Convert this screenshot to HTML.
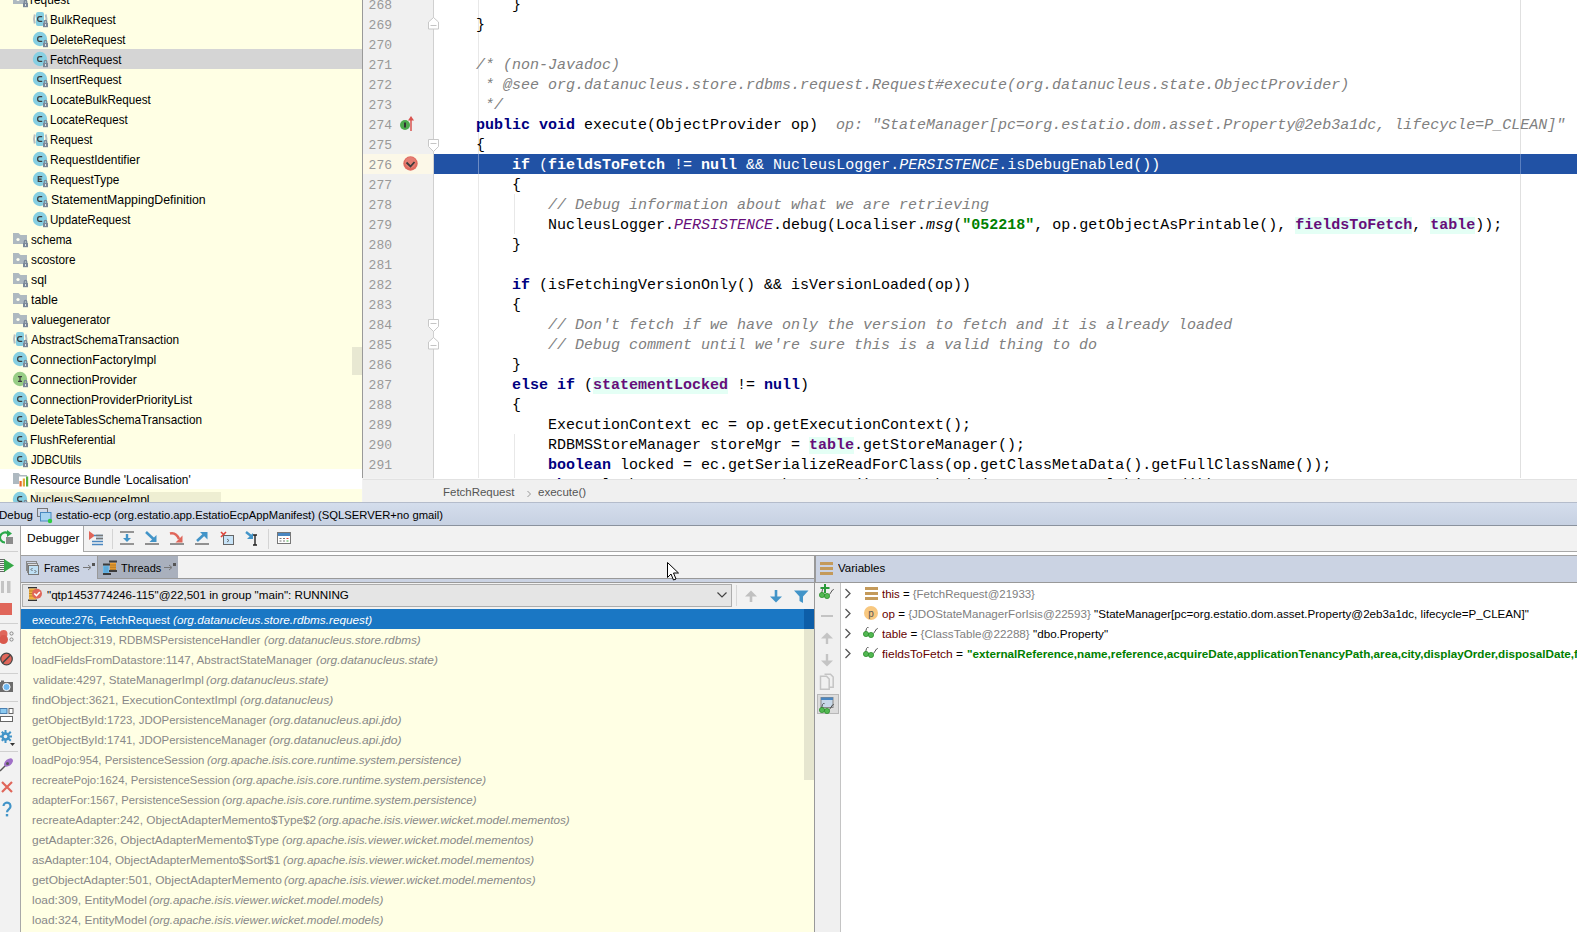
<!DOCTYPE html>
<html><head><meta charset="utf-8"><style>
*{margin:0;padding:0;box-sizing:border-box}
html,body{width:1577px;height:932px;overflow:hidden;background:#f2f2f2;font-family:"Liberation Sans",sans-serif;font-size:12px;color:#000}
.a{position:absolute}
svg{position:absolute;overflow:visible}
#tree{left:0;top:0;width:362px;height:502px;background:#ffffe4;overflow:hidden}
.tr{position:absolute;left:0;width:362px;height:20px;white-space:pre;font-size:12.2px;color:#000}
.tt{position:absolute;top:1px;line-height:20px;height:20px}
#gut{left:362px;top:0;width:72px;height:478px;background:#f0f0f0;border-left:1px solid #999;overflow:hidden}
#code{left:434px;top:0;width:1143px;height:479px;background:#fff;overflow:hidden}
.ln{position:absolute;left:-2px;width:31px;text-align:right;font-family:"Liberation Mono",monospace;font-size:13px;color:#999;height:20px;line-height:24px}
.cl{position:absolute;left:6px;height:20px;line-height:24px;white-space:pre;font-family:"Liberation Mono",monospace;font-size:15px;color:#000}
.k{color:#000080;font-weight:bold}
.cm{color:#808080;font-style:italic}
.st{color:#008000;font-weight:bold}
.sf{color:#660e7a;font-style:italic}
.fl{color:#660e7a;font-weight:bold;background:#e4fff5}
.hl .k,.hl .fl,.hl .sf,.hl{color:#fff}
.hl .fl{background:none}
#bc{left:363px;top:479px;width:1214px;height:23px;background:#f0f0f0;border-top:1px solid #e2e2e2;color:#555;font-size:11.5px;line-height:23px}
#dtitle{left:0;top:502px;width:1577px;height:24px;background:linear-gradient(#d4ddec,#c7d1e2);border-top:1px solid #b4bccb;border-bottom:1px solid #8a929e;line-height:23px;font-size:11.3px}
#ltb{left:0;top:526px;width:21px;height:406px;background:#f2f2f2;border-right:1px solid #a8a8a8}
#dtb{left:21px;top:526px;width:1556px;height:29px;background:#fff}
#ftabs{left:21px;top:555px;width:794px;height:28px;background:#f2f2f2;border-top:1px solid #a0a0a0;border-bottom:1px solid #999}
#frames{left:21px;top:609px;width:794px;height:323px;background:#ffffe4;overflow:hidden}
.fr{position:absolute;left:0;width:783px;height:20px;line-height:23px;padding-left:11px;white-space:pre;color:#888;font-size:11.5px}
.fr i{font-style:italic}
#vhdr{left:815px;top:555px;width:762px;height:28px;background:#cbd3e3;border-top:1px solid #a0a0a0;border-left:1px solid #999;border-bottom:1px solid #999;line-height:25px;font-size:11.5px}
#vtb{left:815px;top:583px;width:26px;height:349px;background:#f0f0f0;border-right:1px solid #c4c4c4}
#vars{left:841px;top:583px;width:736px;height:349px;background:#fff;overflow:hidden}
.vr{position:absolute;height:20px;line-height:23px;white-space:pre;font-size:11.5px}
</style></head><body>
<div id="tree" class="a">
<div class="tr" style="top:-11px;"><svg style="left:13px;top:4px" width="18" height="15" viewBox="0 0 18 15"><path d="M0 0h5.5l2 2H14v9H0z" fill="#aeb9c0"/><circle cx="5" cy="6.5" r="1.6" fill="#fffff0"/><path d="M11.25 10.5v-1.8a1.25 1.25 0 0 1 2.5 0v1.8" stroke="#7a8899" fill="none" stroke-width="1.3"/><rect x="10" y="10" width="5" height="4.2" fill="#7a8899"/><rect x="12" y="11" width="1" height="2" fill="#e0e4e0"/></svg><span class="tt" style="left:30.31px;transform:scaleX(0.9736);transform-origin:0 0">request</span></div>
<div class="tr" style="top:9px;"><svg style="left:33px;top:3px" width="16" height="16" viewBox="0 0 16 16"><path d="M1.8 2.5Q0.2 7 1.8 11.5" stroke="#b4bcc0" stroke-width="2" fill="none"/><path d="M12.7 2.5Q14.3 7 12.7 11.5" stroke="#b4bcc0" stroke-width="2" fill="none"/><rect x="3" y="0" width="8" height="14" rx="2" fill="#86cfe2"/><path d="M9.2 4.6H6.6Q4.6 4.6 4.6 7Q4.6 9.4 6.6 9.4H9.2" stroke="#3c3c3c" stroke-width="1.25" fill="none"/><path d="M11.25 11.5v-1.8a1.25 1.25 0 0 1 2.5 0v1.8" stroke="#7a8899" fill="none" stroke-width="1.3"/><rect x="10" y="11" width="5" height="4.2" fill="#7a8899"/><rect x="12" y="12" width="1" height="2" fill="#e0e4e0"/></svg><span class="tt" style="left:50.15px;transform:scaleX(0.9528);transform-origin:0 0">BulkRequest</span></div>
<div class="tr" style="top:29px;"><svg style="left:33px;top:3px" width="16" height="16" viewBox="0 0 16 16"><circle cx="7" cy="7" r="7.2" fill="#86cfe2"/><path d="M9.2 4.6H6.6Q4.6 4.6 4.6 7Q4.6 9.4 6.6 9.4H9.2" stroke="#3c3c3c" stroke-width="1.25" fill="none"/><path d="M11.25 11.5v-1.8a1.25 1.25 0 0 1 2.5 0v1.8" stroke="#7a8899" fill="none" stroke-width="1.3"/><rect x="10" y="11" width="5" height="4.2" fill="#7a8899"/><rect x="12" y="12" width="1" height="2" fill="#e0e4e0"/></svg><span class="tt" style="left:50.16px;transform:scaleX(0.9367);transform-origin:0 0">DeleteRequest</span></div>
<div class="tr" style="top:49px;background:#d5d5d5;"><svg style="left:33px;top:3px" width="16" height="16" viewBox="0 0 16 16"><circle cx="7" cy="7" r="7.2" fill="#86cfe2"/><path d="M9.2 4.6H6.6Q4.6 4.6 4.6 7Q4.6 9.4 6.6 9.4H9.2" stroke="#3c3c3c" stroke-width="1.25" fill="none"/><path d="M11.25 11.5v-1.8a1.25 1.25 0 0 1 2.5 0v1.8" stroke="#7a8899" fill="none" stroke-width="1.3"/><rect x="10" y="11" width="5" height="4.2" fill="#7a8899"/><rect x="12" y="12" width="1" height="2" fill="#e0e4e0"/></svg><span class="tt" style="left:50.16px;transform:scaleX(0.9414);transform-origin:0 0">FetchRequest</span></div>
<div class="tr" style="top:69px;"><svg style="left:33px;top:3px" width="16" height="16" viewBox="0 0 16 16"><circle cx="7" cy="7" r="7.2" fill="#86cfe2"/><path d="M9.2 4.6H6.6Q4.6 4.6 4.6 7Q4.6 9.4 6.6 9.4H9.2" stroke="#3c3c3c" stroke-width="1.25" fill="none"/><path d="M11.25 11.5v-1.8a1.25 1.25 0 0 1 2.5 0v1.8" stroke="#7a8899" fill="none" stroke-width="1.3"/><rect x="10" y="11" width="5" height="4.2" fill="#7a8899"/><rect x="12" y="12" width="1" height="2" fill="#e0e4e0"/></svg><span class="tt" style="left:50.04px;transform:scaleX(0.9430);transform-origin:0 0">InsertRequest</span></div>
<div class="tr" style="top:89px;"><svg style="left:33px;top:3px" width="16" height="16" viewBox="0 0 16 16"><circle cx="7" cy="7" r="7.2" fill="#86cfe2"/><path d="M9.2 4.6H6.6Q4.6 4.6 4.6 7Q4.6 9.4 6.6 9.4H9.2" stroke="#3c3c3c" stroke-width="1.25" fill="none"/><path d="M11.25 11.5v-1.8a1.25 1.25 0 0 1 2.5 0v1.8" stroke="#7a8899" fill="none" stroke-width="1.3"/><rect x="10" y="11" width="5" height="4.2" fill="#7a8899"/><rect x="12" y="12" width="1" height="2" fill="#e0e4e0"/></svg><span class="tt" style="left:50.15px;transform:scaleX(0.9531);transform-origin:0 0">LocateBulkRequest</span></div>
<div class="tr" style="top:109px;"><svg style="left:33px;top:3px" width="16" height="16" viewBox="0 0 16 16"><circle cx="7" cy="7" r="7.2" fill="#86cfe2"/><path d="M9.2 4.6H6.6Q4.6 4.6 4.6 7Q4.6 9.4 6.6 9.4H9.2" stroke="#3c3c3c" stroke-width="1.25" fill="none"/><path d="M11.25 11.5v-1.8a1.25 1.25 0 0 1 2.5 0v1.8" stroke="#7a8899" fill="none" stroke-width="1.3"/><rect x="10" y="11" width="5" height="4.2" fill="#7a8899"/><rect x="12" y="12" width="1" height="2" fill="#e0e4e0"/></svg><span class="tt" style="left:50.15px;transform:scaleX(0.9469);transform-origin:0 0">LocateRequest</span></div>
<div class="tr" style="top:129px;"><svg style="left:33px;top:3px" width="16" height="16" viewBox="0 0 16 16"><path d="M1.8 2.5Q0.2 7 1.8 11.5" stroke="#b4bcc0" stroke-width="2" fill="none"/><path d="M12.7 2.5Q14.3 7 12.7 11.5" stroke="#b4bcc0" stroke-width="2" fill="none"/><rect x="3" y="0" width="8" height="14" rx="2" fill="#86cfe2"/><path d="M9.2 4.6H6.6Q4.6 4.6 4.6 7Q4.6 9.4 6.6 9.4H9.2" stroke="#3c3c3c" stroke-width="1.25" fill="none"/><path d="M11.25 11.5v-1.8a1.25 1.25 0 0 1 2.5 0v1.8" stroke="#7a8899" fill="none" stroke-width="1.3"/><rect x="10" y="11" width="5" height="4.2" fill="#7a8899"/><rect x="12" y="12" width="1" height="2" fill="#e0e4e0"/></svg><span class="tt" style="left:50.16px;transform:scaleX(0.9367);transform-origin:0 0">Request</span></div>
<div class="tr" style="top:149px;"><svg style="left:33px;top:3px" width="16" height="16" viewBox="0 0 16 16"><circle cx="7" cy="7" r="7.2" fill="#86cfe2"/><path d="M9.2 4.6H6.6Q4.6 4.6 4.6 7Q4.6 9.4 6.6 9.4H9.2" stroke="#3c3c3c" stroke-width="1.25" fill="none"/><path d="M11.25 11.5v-1.8a1.25 1.25 0 0 1 2.5 0v1.8" stroke="#7a8899" fill="none" stroke-width="1.3"/><rect x="10" y="11" width="5" height="4.2" fill="#7a8899"/><rect x="12" y="12" width="1" height="2" fill="#e0e4e0"/></svg><span class="tt" style="left:50.12px;transform:scaleX(0.9754);transform-origin:0 0">RequestIdentifier</span></div>
<div class="tr" style="top:169px;"><svg style="left:33px;top:3px" width="16" height="16" viewBox="0 0 16 16"><circle cx="7" cy="7" r="7.2" fill="#86cfe2"/><path d="M9.2 4.6H5.3V9.4H9.2M5.3 7H8.6" stroke="#3c3c3c" stroke-width="1.25" fill="none"/><path d="M11.25 11.5v-1.8a1.25 1.25 0 0 1 2.5 0v1.8" stroke="#7a8899" fill="none" stroke-width="1.3"/><rect x="10" y="11" width="5" height="4.2" fill="#7a8899"/><rect x="12" y="12" width="1" height="2" fill="#e0e4e0"/></svg><span class="tt" style="left:50.14px;transform:scaleX(0.9634);transform-origin:0 0">RequestType</span></div>
<div class="tr" style="top:189px;"><svg style="left:33px;top:3px" width="16" height="16" viewBox="0 0 16 16"><circle cx="7" cy="7" r="7.2" fill="#86cfe2"/><path d="M9.2 4.6H6.6Q4.6 4.6 4.6 7Q4.6 9.4 6.6 9.4H9.2" stroke="#3c3c3c" stroke-width="1.25" fill="none"/><path d="M11.25 11.5v-1.8a1.25 1.25 0 0 1 2.5 0v1.8" stroke="#7a8899" fill="none" stroke-width="1.3"/><rect x="10" y="11" width="5" height="4.2" fill="#7a8899"/><rect x="12" y="12" width="1" height="2" fill="#e0e4e0"/></svg><span class="tt" style="left:50.54px;transform:scaleX(1.0101);transform-origin:0 0">StatementMappingDefinition</span></div>
<div class="tr" style="top:209px;"><svg style="left:33px;top:3px" width="16" height="16" viewBox="0 0 16 16"><circle cx="7" cy="7" r="7.2" fill="#86cfe2"/><path d="M9.2 4.6H6.6Q4.6 4.6 4.6 7Q4.6 9.4 6.6 9.4H9.2" stroke="#3c3c3c" stroke-width="1.25" fill="none"/><path d="M11.25 11.5v-1.8a1.25 1.25 0 0 1 2.5 0v1.8" stroke="#7a8899" fill="none" stroke-width="1.3"/><rect x="10" y="11" width="5" height="4.2" fill="#7a8899"/><rect x="12" y="12" width="1" height="2" fill="#e0e4e0"/></svg><span class="tt" style="left:50.21px;transform:scaleX(0.9502);transform-origin:0 0">UpdateRequest</span></div>
<div class="tr" style="top:229px;"><svg style="left:13px;top:4px" width="18" height="15" viewBox="0 0 18 15"><path d="M0 0h5.5l2 2H14v9H0z" fill="#aeb9c0"/><circle cx="5" cy="6.5" r="1.6" fill="#fffff0"/><path d="M11.25 10.5v-1.8a1.25 1.25 0 0 1 2.5 0v1.8" stroke="#7a8899" fill="none" stroke-width="1.3"/><rect x="10" y="10" width="5" height="4.2" fill="#7a8899"/><rect x="12" y="11" width="1" height="2" fill="#e0e4e0"/></svg><span class="tt" style="left:30.78px;transform:scaleX(0.9567);transform-origin:0 0">schema</span></div>
<div class="tr" style="top:249px;"><svg style="left:13px;top:4px" width="18" height="15" viewBox="0 0 18 15"><path d="M0 0h5.5l2 2H14v9H0z" fill="#aeb9c0"/><circle cx="5" cy="6.5" r="1.6" fill="#fffff0"/><path d="M11.25 10.5v-1.8a1.25 1.25 0 0 1 2.5 0v1.8" stroke="#7a8899" fill="none" stroke-width="1.3"/><rect x="10" y="10" width="5" height="4.2" fill="#7a8899"/><rect x="12" y="11" width="1" height="2" fill="#e0e4e0"/></svg><span class="tt" style="left:30.77px;transform:scaleX(0.9673);transform-origin:0 0">scostore</span></div>
<div class="tr" style="top:269px;"><svg style="left:13px;top:4px" width="18" height="15" viewBox="0 0 18 15"><path d="M0 0h5.5l2 2H14v9H0z" fill="#aeb9c0"/><circle cx="5" cy="6.5" r="1.6" fill="#fffff0"/><path d="M11.25 10.5v-1.8a1.25 1.25 0 0 1 2.5 0v1.8" stroke="#7a8899" fill="none" stroke-width="1.3"/><rect x="10" y="10" width="5" height="4.2" fill="#7a8899"/><rect x="12" y="11" width="1" height="2" fill="#e0e4e0"/></svg><span class="tt" style="left:30.76px;transform:scaleX(1.0122);transform-origin:0 0">sql</span></div>
<div class="tr" style="top:289px;"><svg style="left:13px;top:4px" width="18" height="15" viewBox="0 0 18 15"><path d="M0 0h5.5l2 2H14v9H0z" fill="#aeb9c0"/><circle cx="5" cy="6.5" r="1.6" fill="#fffff0"/><path d="M11.25 10.5v-1.8a1.25 1.25 0 0 1 2.5 0v1.8" stroke="#7a8899" fill="none" stroke-width="1.3"/><rect x="10" y="10" width="5" height="4.2" fill="#7a8899"/><rect x="12" y="11" width="1" height="2" fill="#e0e4e0"/></svg><span class="tt" style="left:30.91px;transform:scaleX(1.0116);transform-origin:0 0">table</span></div>
<div class="tr" style="top:309px;"><svg style="left:13px;top:4px" width="18" height="15" viewBox="0 0 18 15"><path d="M0 0h5.5l2 2H14v9H0z" fill="#aeb9c0"/><circle cx="5" cy="6.5" r="1.6" fill="#fffff0"/><path d="M11.25 10.5v-1.8a1.25 1.25 0 0 1 2.5 0v1.8" stroke="#7a8899" fill="none" stroke-width="1.3"/><rect x="10" y="10" width="5" height="4.2" fill="#7a8899"/><rect x="12" y="11" width="1" height="2" fill="#e0e4e0"/></svg><span class="tt" style="left:31.06px;transform:scaleX(0.9733);transform-origin:0 0">valuegenerator</span></div>
<div class="tr" style="top:329px;"><svg style="left:13px;top:3px" width="16" height="16" viewBox="0 0 16 16"><path d="M1.8 2.5Q0.2 7 1.8 11.5" stroke="#b4bcc0" stroke-width="2" fill="none"/><path d="M12.7 2.5Q14.3 7 12.7 11.5" stroke="#b4bcc0" stroke-width="2" fill="none"/><rect x="3" y="0" width="8" height="14" rx="2" fill="#86cfe2"/><path d="M9.2 4.6H6.6Q4.6 4.6 4.6 7Q4.6 9.4 6.6 9.4H9.2" stroke="#3c3c3c" stroke-width="1.25" fill="none"/><path d="M11.25 11.5v-1.8a1.25 1.25 0 0 1 2.5 0v1.8" stroke="#7a8899" fill="none" stroke-width="1.3"/><rect x="10" y="11" width="5" height="4.2" fill="#7a8899"/><rect x="12" y="12" width="1" height="2" fill="#e0e4e0"/></svg><span class="tt" style="left:31.08px;transform:scaleX(0.9709);transform-origin:0 0">AbstractSchemaTransaction</span></div>
<div class="tr" style="top:349px;"><svg style="left:13px;top:3px" width="16" height="16" viewBox="0 0 16 16"><circle cx="7" cy="7" r="7.2" fill="#86cfe2"/><path d="M9.2 4.6H6.6Q4.6 4.6 4.6 7Q4.6 9.4 6.6 9.4H9.2" stroke="#3c3c3c" stroke-width="1.25" fill="none"/><path d="M11.25 11.5v-1.8a1.25 1.25 0 0 1 2.5 0v1.8" stroke="#7a8899" fill="none" stroke-width="1.3"/><rect x="10" y="11" width="5" height="4.2" fill="#7a8899"/><rect x="12" y="12" width="1" height="2" fill="#e0e4e0"/></svg><span class="tt" style="left:30.48px;transform:scaleX(1.0082);transform-origin:0 0">ConnectionFactoryImpl</span></div>
<div class="tr" style="top:369px;"><svg style="left:13px;top:3px" width="16" height="16" viewBox="0 0 16 16"><circle cx="7" cy="7" r="7.2" fill="#98cd85"/><path d="M5 4.6H9M7 4.6V9.4M5 9.4H9" stroke="#3c3c3c" stroke-width="1.25" fill="none"/><path d="M11.25 11.5v-1.8a1.25 1.25 0 0 1 2.5 0v1.8" stroke="#7a8899" fill="none" stroke-width="1.3"/><rect x="10" y="11" width="5" height="4.2" fill="#7a8899"/><rect x="12" y="12" width="1" height="2" fill="#e0e4e0"/></svg><span class="tt" style="left:30.48px;transform:scaleX(0.9970);transform-origin:0 0">ConnectionProvider</span></div>
<div class="tr" style="top:389px;"><svg style="left:13px;top:3px" width="16" height="16" viewBox="0 0 16 16"><circle cx="7" cy="7" r="7.2" fill="#86cfe2"/><path d="M9.2 4.6H6.6Q4.6 4.6 4.6 7Q4.6 9.4 6.6 9.4H9.2" stroke="#3c3c3c" stroke-width="1.25" fill="none"/><path d="M11.25 11.5v-1.8a1.25 1.25 0 0 1 2.5 0v1.8" stroke="#7a8899" fill="none" stroke-width="1.3"/><rect x="10" y="11" width="5" height="4.2" fill="#7a8899"/><rect x="12" y="12" width="1" height="2" fill="#e0e4e0"/></svg><span class="tt" style="left:30.49px;transform:scaleX(0.9895);transform-origin:0 0">ConnectionProviderPriorityList</span></div>
<div class="tr" style="top:409px;"><svg style="left:13px;top:3px" width="16" height="16" viewBox="0 0 16 16"><circle cx="7" cy="7" r="7.2" fill="#86cfe2"/><path d="M9.2 4.6H6.6Q4.6 4.6 4.6 7Q4.6 9.4 6.6 9.4H9.2" stroke="#3c3c3c" stroke-width="1.25" fill="none"/><path d="M11.25 11.5v-1.8a1.25 1.25 0 0 1 2.5 0v1.8" stroke="#7a8899" fill="none" stroke-width="1.3"/><rect x="10" y="11" width="5" height="4.2" fill="#7a8899"/><rect x="12" y="12" width="1" height="2" fill="#e0e4e0"/></svg><span class="tt" style="left:30.13px;transform:scaleX(0.9643);transform-origin:0 0">DeleteTablesSchemaTransaction</span></div>
<div class="tr" style="top:429px;"><svg style="left:13px;top:3px" width="16" height="16" viewBox="0 0 16 16"><circle cx="7" cy="7" r="7.2" fill="#86cfe2"/><path d="M9.2 4.6H6.6Q4.6 4.6 4.6 7Q4.6 9.4 6.6 9.4H9.2" stroke="#3c3c3c" stroke-width="1.25" fill="none"/><path d="M11.25 11.5v-1.8a1.25 1.25 0 0 1 2.5 0v1.8" stroke="#7a8899" fill="none" stroke-width="1.3"/><rect x="10" y="11" width="5" height="4.2" fill="#7a8899"/><rect x="12" y="12" width="1" height="2" fill="#e0e4e0"/></svg><span class="tt" style="left:30.14px;transform:scaleX(0.9629);transform-origin:0 0">FlushReferential</span></div>
<div class="tr" style="top:449px;"><svg style="left:13px;top:3px" width="16" height="16" viewBox="0 0 16 16"><circle cx="7" cy="7" r="7.2" fill="#86cfe2"/><path d="M9.2 4.6H6.6Q4.6 4.6 4.6 7Q4.6 9.4 6.6 9.4H9.2" stroke="#3c3c3c" stroke-width="1.25" fill="none"/><path d="M11.25 11.5v-1.8a1.25 1.25 0 0 1 2.5 0v1.8" stroke="#7a8899" fill="none" stroke-width="1.3"/><rect x="10" y="11" width="5" height="4.2" fill="#7a8899"/><rect x="12" y="12" width="1" height="2" fill="#e0e4e0"/></svg><span class="tt" style="left:30.93px;transform:scaleX(0.9054);transform-origin:0 0">JDBCUtils</span></div>
<div class="tr" style="top:469px;background:#fff;"><svg style="left:13px;top:4px" width="18" height="15" viewBox="0 0 18 15"><path d="M0 0h5.5l2 2H14v1.5H6V11H0z" fill="#aeb9c0"/><rect x="6.5" y="8" width="2.2" height="5.5" fill="#e8682a"/><rect x="9.8" y="5.5" width="2.2" height="8" fill="#e0a838"/><rect x="13" y="3.5" width="2.2" height="10" fill="#58b040"/></svg><span class="tt" style="left:30.13px;transform:scaleX(0.9684);transform-origin:0 0">Resource Bundle &#x27;Localisation&#x27;</span></div>
<div class="tr" style="top:489px;"><div class="a" style="left:35px;top:3px;width:186px;height:17px;background:#eeeed2"></div><svg style="left:13px;top:3px" width="16" height="16" viewBox="0 0 16 16"><circle cx="7" cy="7" r="7.2" fill="#86cfe2"/><path d="M9.2 4.6H6.6Q4.6 4.6 4.6 7Q4.6 9.4 6.6 9.4H9.2" stroke="#3c3c3c" stroke-width="1.25" fill="none"/><path d="M11.25 11.5v-1.8a1.25 1.25 0 0 1 2.5 0v1.8" stroke="#7a8899" fill="none" stroke-width="1.3"/><rect x="10" y="11" width="5" height="4.2" fill="#7a8899"/><rect x="12" y="12" width="1" height="2" fill="#e0e4e0"/></svg><span class="tt" style="left:30.12px;transform:scaleX(0.9798);transform-origin:0 0">NucleusSequenceImpl</span></div>
<div class="a" style="left:352px;top:347px;width:10px;height:28px;background:#e8e8d2"></div>
</div>
<div id="gut" class="a">
<div class="a" style="left:0;top:154px;width:70px;height:20px;background:#fcf8e8"></div>
<div class="ln" style="top:-6px">268</div>
<div class="ln" style="top:14px">269</div>
<div class="ln" style="top:34px">270</div>
<div class="ln" style="top:54px">271</div>
<div class="ln" style="top:74px">272</div>
<div class="ln" style="top:94px">273</div>
<div class="ln" style="top:114px">274</div>
<div class="ln" style="top:134px">275</div>
<div class="ln" style="top:154px">276</div>
<div class="ln" style="top:174px">277</div>
<div class="ln" style="top:194px">278</div>
<div class="ln" style="top:214px">279</div>
<div class="ln" style="top:234px">280</div>
<div class="ln" style="top:254px">281</div>
<div class="ln" style="top:274px">282</div>
<div class="ln" style="top:294px">283</div>
<div class="ln" style="top:314px">284</div>
<div class="ln" style="top:334px">285</div>
<div class="ln" style="top:354px">286</div>
<div class="ln" style="top:374px">287</div>
<div class="ln" style="top:394px">288</div>
<div class="ln" style="top:414px">289</div>
<div class="ln" style="top:434px">290</div>
<div class="ln" style="top:454px">291</div>
<div class="ln" style="top:474px">292</div>
<div class="a" style="left:70px;top:0;width:1px;height:478px;background:#d0d0d0"></div>
<svg style="left:36px;top:115px" width="20" height="18" viewBox="0 0 20 18"><circle cx="6" cy="10" r="5" fill="#4eaa4e"/><rect x="5" y="7.5" width="2" height="5" fill="#333"/><path d="M12 16V3" stroke="#d9534f" stroke-width="1.5"/><path d="M9 5.5L12 1L15 5.5z" fill="#d9534f"/></svg>
<svg style="left:40px;top:156px" width="16" height="16" viewBox="0 0 16 16"><circle cx="7.5" cy="7.5" r="7.2" fill="#e06a5e"/><circle cx="7.5" cy="6.5" r="5.5" fill="#e88a80" opacity="0.6"/><path d="M3.5 6.5L7.5 10.5L11.5 6" stroke="#3c3c3c" stroke-width="1.8" fill="none"/></svg>
</div>
<div id="code" class="a">
<div class="a" style="left:1086px;top:0;width:1px;height:478px;background:#e0e0e0"></div>
<div class="a" style="left:0;top:154px;width:1143px;height:20px;background:#2152a5"></div>
<div class="a" style="left:1086px;top:154px;width:1px;height:20px;background:#5a7fc0"></div>
<div class="a" style="left:44px;top:0;width:1px;height:478px;background:#e8e8e8"></div>
<div class="a" style="left:44px;top:154px;width:1px;height:20px;background:#6d8cc4"></div>
<div class="a" style="left:80px;top:194px;width:1px;height:40px;background:#e8e8e8"></div>
<div class="a" style="left:80px;top:434px;width:1px;height:44px;background:#e8e8e8"></div>
<div class="cl" style="top:-6px">        }</div>
<div class="cl" style="top:14px">    }</div>
<div class="cl" style="top:34px"></div>
<div class="cl" style="top:54px"><span class="cm">    /* (non-Javadoc)</span></div>
<div class="cl" style="top:74px"><span class="cm">     * @see org.datanucleus.store.rdbms.request.Request#execute(org.datanucleus.state.ObjectProvider)</span></div>
<div class="cl" style="top:94px"><span class="cm">     */</span></div>
<div class="cl" style="top:114px">    <span class="k">public void</span> execute(ObjectProvider op)  <span class="cm">op: "StateManager[pc=org.estatio.dom.asset.Property@2eb3a1dc, lifecycle=P_CLEAN]"</span></div>
<div class="cl" style="top:134px">    {</div>
<div class="cl hl" style="top:154px">        <span class="k">if</span> (<span class="fl">fieldsToFetch</span> != <span class="k">null</span> &amp;&amp; NucleusLogger.<span class="sf">PERSISTENCE</span>.isDebugEnabled())</div>
<div class="cl" style="top:174px">        {</div>
<div class="cl" style="top:194px"><span class="cm">            // Debug information about what we are retrieving</span></div>
<div class="cl" style="top:214px">            NucleusLogger.<span class="sf">PERSISTENCE</span>.debug(Localiser.<span class="sf" style="color:#000">msg</span>(<span class="st">"052218"</span>, op.getObjectAsPrintable(), <span class="fl">fieldsToFetch</span>, <span class="fl">table</span>));</div>
<div class="cl" style="top:234px">        }</div>
<div class="cl" style="top:254px"></div>
<div class="cl" style="top:274px">        <span class="k">if</span> (isFetchingVersionOnly() &amp;&amp; isVersionLoaded(op))</div>
<div class="cl" style="top:294px">        {</div>
<div class="cl" style="top:314px"><span class="cm">            // Don't fetch if we have only the version to fetch and it is already loaded</span></div>
<div class="cl" style="top:334px"><span class="cm">            // Debug comment until we're sure this is a valid thing to do</span></div>
<div class="cl" style="top:354px">        }</div>
<div class="cl" style="top:374px">        <span class="k">else if</span> (<span class="fl">statementLocked</span> != <span class="k">null</span>)</div>
<div class="cl" style="top:394px">        {</div>
<div class="cl" style="top:414px">            ExecutionContext ec = op.getExecutionContext();</div>
<div class="cl" style="top:434px">            RDBMSStoreManager storeMgr = <span class="fl">table</span>.getStoreManager();</div>
<div class="cl" style="top:454px">            <span class="k">boolean</span> locked = ec.getSerializeReadForClass(op.getClassMetaData().getFullClassName());</div>
<div class="cl" style="top:474px">            <span class="k">short</span> lockType = ec.getLockManager().getLockMode(op.getInternalObjectId());</div>
</div>
<svg style="left:428px;top:17px" width="11" height="13" viewBox="0 0 11 13"><path d="M0.5 5L5.5 0.5L10.5 5V12H0.5z" fill="#fff" stroke="#c8c8c8"/><path d="M2.5 8.5h6" stroke="#c4c4c4"/></svg>
<svg style="left:428px;top:139px" width="11" height="13" viewBox="0 0 11 13"><path d="M0.5 0.5H10.5V7.5L5.5 12.5L0.5 7.5z" fill="#fff" stroke="#c8c8c8"/><path d="M2.5 4.5h6" stroke="#c4c4c4"/></svg>
<svg style="left:428px;top:319px" width="11" height="13" viewBox="0 0 11 13"><path d="M0.5 0.5H10.5V7.5L5.5 12.5L0.5 7.5z" fill="#fff" stroke="#c8c8c8"/><path d="M2.5 4.5h6" stroke="#c4c4c4"/></svg>
<svg style="left:428px;top:337px" width="11" height="13" viewBox="0 0 11 13"><path d="M0.5 5L5.5 0.5L10.5 5V12H0.5z" fill="#fff" stroke="#c8c8c8"/><path d="M2.5 8.5h6" stroke="#c4c4c4"/></svg>
<div id="bc" class="a"><svg style="left:163px;top:10px" width="6" height="8" viewBox="0 0 6 8"><path d="M1.5 1L4.5 4L1.5 7" stroke="#999" fill="none" stroke-width="1"/></svg></div>
<div id="dtitle" class="a"><svg style="left:37px;top:5px" width="16" height="16" viewBox="0 0 16 16"><rect x="0.5" y="0.5" width="10" height="8" fill="none" stroke="#777"/><rect x="3.5" y="4.5" width="10.5" height="8.5" fill="#a8d4f0" stroke="#4a8ac0"/><circle cx="13" cy="13" r="2.2" fill="#2ecc40"/></svg></div>
<div id="ltb" class="a"></div>
<svg style="left:0px;top:530px" width="16" height="16" viewBox="0 0 16 16"><path d="M8 3.5A5 5 0 1 0 5 12.5" stroke="#2aa84a" stroke-width="2.2" fill="none"/><path d="M7 0L12 3.5L7 7z" fill="#2aa84a"/><rect x="6" y="7" width="7" height="7" fill="#8c8c8c"/></svg>
<div class="a" style="left:0;top:551px;width:18px;height:1px;background:#d0d0d0"></div>
<svg style="left:0px;top:559px" width="16" height="14" viewBox="0 0 16 14"><path d="M0 0.5h5M0 2.5h5M0 4.5h5M0 6.5h5M0 8.5h5M0 10.5h5M0 12.5h5" stroke="#666" stroke-width="1"/><path d="M4 0L14 6.5L4 13z" fill="#35a846"/></svg>
<svg style="left:0px;top:581px" width="14" height="13" viewBox="0 0 14 13"><rect x="1" y="0" width="3" height="12" fill="#c4c4c4"/><rect x="7" y="0" width="3.5" height="12" fill="#c4c4c4"/></svg>
<svg style="left:0px;top:603px" width="14" height="13" viewBox="0 0 14 13"><rect x="0" y="0" width="12" height="12" fill="#e0665a"/></svg>
<div class="a" style="left:0;top:623px;width:18px;height:1px;background:#d0d0d0"></div>
<svg style="left:0px;top:630px" width="16" height="15" viewBox="0 0 16 15"><circle cx="3.5" cy="4" r="4" fill="#e0665a"/><circle cx="3.5" cy="9.5" r="4.5" fill="#d9584c"/><circle cx="11.5" cy="3.5" r="1.6" fill="none" stroke="#888"/><circle cx="11.5" cy="9.5" r="1.6" fill="none" stroke="#888"/></svg>
<svg style="left:0px;top:652px" width="15" height="15" viewBox="0 0 15 15"><circle cx="6.5" cy="7" r="5.8" fill="#e0665a" stroke="#444" stroke-width="1.2"/><path d="M2.5 11L10.5 3" stroke="#444" stroke-width="1.6"/></svg>
<div class="a" style="left:0;top:673px;width:18px;height:1px;background:#d0d0d0"></div>
<svg style="left:0px;top:679px" width="15" height="15" viewBox="0 0 15 15"><rect x="0" y="3" width="13" height="10" fill="#6c6c6c"/><rect x="1" y="1.5" width="3" height="2" fill="#6c6c6c"/><circle cx="6.5" cy="8" r="3.6" fill="#70b8f0" stroke="#fff" stroke-width="1"/></svg>
<div class="a" style="left:0;top:701px;width:18px;height:1px;background:#d0d0d0"></div>
<svg style="left:0px;top:708px" width="15" height="15" viewBox="0 0 15 15"><rect x="0" y="0.5" width="7" height="5" fill="#8ccaf0" stroke="#4a7fb0"/><rect x="9" y="0.5" width="4" height="5" fill="#fff" stroke="#666"/><rect x="0.5" y="8.5" width="12" height="5" fill="#fff" stroke="#666"/></svg>
<svg style="left:0px;top:730px" width="16" height="16" viewBox="0 0 16 16"><g fill="#4294c8"><circle cx="5.5" cy="6.5" r="4.2"/><path d="M4.5 0h2v13h-2zM-1 5.5h13v2H-1z"/><path d="M1 2.5l1.5-1.5 9 9-1.5 1.5zM10 1l1.5 1.5-9 9L1 10z"/></g><circle cx="5.5" cy="6.5" r="1.8" fill="#f2f2f2"/><path d="M10 13h5l-2.5 3z" fill="#333"/></svg>
<div class="a" style="left:0;top:751px;width:18px;height:1px;background:#d0d0d0"></div>
<svg style="left:0px;top:757px" width="15" height="15" viewBox="0 0 15 15"><path d="M0 14L6 8" stroke="#555" stroke-width="1.5"/><ellipse cx="8.5" cy="5.5" rx="5.2" ry="3.2" transform="rotate(-40 8.5 5.5)" fill="#a070c8"/><circle cx="7.5" cy="6.5" r="1.5" fill="#555"/></svg>
<svg style="left:1px;top:781px" width="12" height="12" viewBox="0 0 12 12"><path d="M1 1L11 11M11 1L1 11" stroke="#e0665a" stroke-width="2.2"/></svg>
<svg style="left:2px;top:802px" width="12" height="15" viewBox="0 0 12 15"><path d="M1.5 4a3.5 3.5 0 1 1 5.5 3c-1.3 1-2 1.5-2 3.2" stroke="#4294c8" stroke-width="2.2" fill="none"/><rect x="3.8" y="12" width="2.4" height="2.4" fill="#4294c8"/></svg>
<div id="dtb" class="a"><div class="a" style="left:62px;top:0;width:1500px;height:26px;background:#f2f2f2;border-left:1px solid #a8a8a8;border-bottom:1px solid #a8a8a8"></div></div>
<svg style="left:89px;top:531px" width="15" height="15" viewBox="0 0 15 15"><path d="M0 0L6 4.5L0 9z" fill="#e0665a"/><path d="M5 4.5h9M7 7.5h7M3 10.5h11M3 13.5h11" stroke="#4a86c0" stroke-width="1.6"/><path d="M7 4.5h7M7 7.5h7" stroke="#777" stroke-width="1.6"/></svg>
<div class="a" style="left:112px;top:529px;width:1px;height:20px;background:#d4d4d4"></div>
<svg style="left:120px;top:531px" width="15" height="15" viewBox="0 0 15 15"><path d="M0 1h14M0 13h14" stroke="#777" stroke-width="1.6"/><path d="M7 3v5" stroke="#4294c8" stroke-width="2.4"/><path d="M3 7h8l-4 4z" fill="#4294c8"/></svg>
<svg style="left:145px;top:531px" width="15" height="15" viewBox="0 0 15 15"><path d="M0 13h14" stroke="#777" stroke-width="1.6"/><path d="M1 1L9 8.5" stroke="#4294c8" stroke-width="2.6"/><path d="M11.5 4V11H4.5z" fill="#4294c8"/></svg>
<svg style="left:170px;top:531px" width="15" height="15" viewBox="0 0 15 15"><path d="M0 13h14" stroke="#777" stroke-width="1.6"/><path d="M0 2.5Q6 1 9 8" stroke="#e0665a" stroke-width="2.6" fill="none"/><path d="M12.5 4.5V11.5H5.5z" fill="#e0665a"/></svg>
<svg style="left:195px;top:531px" width="15" height="15" viewBox="0 0 15 15"><path d="M0 13h14" stroke="#777" stroke-width="1.6"/><path d="M2 10L9 3.5" stroke="#4294c8" stroke-width="2.6"/><path d="M5 1H12.5V8.5z" fill="#4294c8"/></svg>
<svg style="left:220px;top:531px" width="15" height="15" viewBox="0 0 15 15"><path d="M1 1L6 6M6 1L1 6" stroke="#e0443a" stroke-width="1.6"/><rect x="3.5" y="4.5" width="10" height="9" fill="#c8e4f8" stroke="#666"/><path d="M7 8l2 1.5-2 1.5" stroke="#555" fill="none" stroke-width="0.8"/></svg>
<svg style="left:245px;top:531px" width="15" height="15" viewBox="0 0 15 15"><path d="M1 1L6 5" stroke="#4294c8" stroke-width="2.4"/><path d="M8 2V8H2z" fill="#4294c8"/><path d="M8 4h4M8 14h4M10 4v10" stroke="#222" stroke-width="1.4"/></svg>
<div class="a" style="left:268px;top:529px;width:1px;height:20px;background:#d4d4d4"></div>
<svg style="left:277px;top:532px" width="14" height="13" viewBox="0 0 14 13"><rect x="0.5" y="0.5" width="13" height="11" fill="#fff" stroke="#777"/><rect x="1" y="1" width="12" height="3" fill="#4a86c0"/><path d="M2.5 6.5h2M6 6.5h2M2.5 9h2M6 9h2" stroke="#777"/><path d="M9.5 6.5h2" stroke="#e0443a"/><path d="M9.5 9h2" stroke="#40b040"/></svg>
<div id="ftabs" class="a"><div class="a" style="left:0;top:0;width:76px;height:26px;background:#cbd3e3"></div><div class="a" style="left:76px;top:0;width:81px;height:23px;background:#a9b0bd;border-left:1px solid #999"></div><div class="a" style="left:76px;top:22px;width:717px;height:1px;background:#999"></div><div class="a" style="left:0;top:23px;width:793px;height:3px;background:#cbd3e3"></div></div>
<svg style="left:26px;top:561px" width="14" height="15" viewBox="0 0 14 15"><rect x="0.5" y="0.5" width="10" height="9" fill="none" stroke="#888"/><rect x="1.5" y="2.5" width="10" height="9" fill="#ddd" stroke="#888"/><rect x="2.5" y="4.5" width="10" height="9" fill="#bfe0f5" stroke="#777"/><path d="M6.5 7L5 8.5L6.5 10M8.5 9l1.5 1.5L8.5 12" stroke="#444" fill="none" stroke-width="0.8"/></svg>
<svg style="left:83px;top:563px" width="12" height="8" viewBox="0 0 12 8"><path d="M0 4.5h7M5 2l3 2.5-3 2.5" stroke="#777" fill="none" stroke-width="1"/><rect x="9" y="0" width="3" height="3" fill="#555"/></svg>
<svg style="left:101px;top:560px" width="17" height="16" viewBox="0 0 17 16"><rect x="2" y="5.5" width="6" height="8" fill="#6ab8e6"/><path d="M4 6.5v6M6 6.5v6" stroke="#4a90c0" stroke-width="0.7"/><path d="M2 4.5h8M2 14h8" stroke="#3c3c3c" stroke-width="2"/><rect x="9" y="2.5" width="6" height="8" fill="#f0a030"/><path d="M9 5h6M9 7.2h6M9 9.3h6" stroke="#9a6a20" stroke-width="0.8"/><path d="M8 1.5h8M8 11h8" stroke="#3c3c3c" stroke-width="2"/></svg>
<svg style="left:164px;top:563px" width="12" height="8" viewBox="0 0 12 8"><path d="M0 4.5h7M5 2l3 2.5-3 2.5" stroke="#777" fill="none" stroke-width="1"/><rect x="9" y="0" width="3" height="3" fill="#555"/></svg>
<div class="a" style="left:22px;top:584px;width:710px;height:23px;background:#e5e5e5;border:1px solid #adadad"></div>
<svg style="left:28px;top:587px" width="16" height="15" viewBox="0 0 16 15"><path d="M0 0.8h9M0 13.2h9" stroke="#333" stroke-width="1.6"/><rect x="1" y="1.5" width="7" height="11" fill="#f0b040"/><path d="M1 4h7M1 6.5h7M1 9h7" stroke="#a87020" stroke-width="0.7"/><circle cx="9" cy="6.7" r="5" fill="#e0665a"/><path d="M6.3 6.5L8.5 8.7L11.8 5" stroke="#fff" stroke-width="1.6" fill="none"/></svg>
<svg style="left:717px;top:592px" width="10" height="7" viewBox="0 0 10 7"><path d="M0.5 0.5L5 5L9.5 0.5" stroke="#444" fill="none" stroke-width="1.2"/></svg>
<div class="a" style="left:736px;top:585px;width:1px;height:21px;background:#d8d8d8"></div>
<svg style="left:745px;top:590px" width="12" height="13" viewBox="0 0 12 13"><path d="M6 12V5" stroke="#c0c0c0" stroke-width="2.6"/><path d="M0 6.5L6 0.5L12 6.5z" fill="#c0c0c0"/></svg>
<svg style="left:770px;top:590px" width="12" height="13" viewBox="0 0 12 13"><path d="M6 0V7" stroke="#4294c8" stroke-width="2.6"/><path d="M0 6.5L6 12.5L12 6.5z" fill="#4294c8"/></svg>
<svg style="left:794px;top:590px" width="15" height="13" viewBox="0 0 15 13"><path d="M0 0.5H14.5L9 6.5V13L5.5 11V6.5z" fill="#4294c8"/></svg>
<div id="frames" class="a">
<div class="a" style="left:0;top:0;width:793px;height:20px;background:#1a77c4"></div>
<div class="fr" style="top:0px;color:#fff;"><span class="a" style="left:11.12px;transform:scaleX(0.9795);transform-origin:0 0">execute:276, FetchRequest</span><i class="a" style="left:151.85px;transform:scaleX(1.0210);transform-origin:0 0">(org.datanucleus.store.rdbms.request)</i></div>
<div class="fr" style="top:20px;"><span class="a" style="left:11.44px;transform:scaleX(0.9979);transform-origin:0 0">fetchObject:319, RDBMSPersistenceHandler</span><i class="a" style="left:242.65px;transform:scaleX(1.0218);transform-origin:0 0">(org.datanucleus.store.rdbms)</i></div>
<div class="fr" style="top:40px;"><span class="a" style="left:10.82px;transform:scaleX(1.0109);transform-origin:0 0">loadFieldsFromDatastore:1147, AbstractStateManager</span><i class="a" style="left:294.54px;transform:scaleX(1.0370);transform-origin:0 0">(org.datanucleus.state)</i></div>
<div class="fr" style="top:60px;"><span class="a" style="left:11.56px;transform:scaleX(1.0121);transform-origin:0 0">validate:4297, StateManagerImpl</span><i class="a" style="left:184.64px;transform:scaleX(1.0421);transform-origin:0 0">(org.datanucleus.state)</i></div>
<div class="fr" style="top:80px;"><span class="a" style="left:11.43px;transform:scaleX(1.0310);transform-origin:0 0">findObject:3621, ExecutionContextImpl</span><i class="a" style="left:218.64px;transform:scaleX(1.0411);transform-origin:0 0">(org.datanucleus)</i></div>
<div class="fr" style="top:100px;"><span class="a" style="left:11.12px;transform:scaleX(0.9936);transform-origin:0 0">getObjectById:1723, JDOPersistenceManager</span><i class="a" style="left:248.34px;transform:scaleX(1.0466);transform-origin:0 0">(org.datanucleus.api.jdo)</i></div>
<div class="fr" style="top:120px;"><span class="a" style="left:11.12px;transform:scaleX(0.9936);transform-origin:0 0">getObjectById:1741, JDOPersistenceManager</span><i class="a" style="left:248.34px;transform:scaleX(1.0466);transform-origin:0 0">(org.datanucleus.api.jdo)</i></div>
<div class="fr" style="top:140px;"><span class="a" style="left:10.83px;transform:scaleX(0.9878);transform-origin:0 0">loadPojo:954, PersistenceSession</span><i class="a" style="left:185.56px;transform:scaleX(1.0023);transform-origin:0 0">(org.apache.isis.core.runtime.system.persistence)</i></div>
<div class="fr" style="top:160px;"><span class="a" style="left:10.85px;transform:scaleX(0.9837);transform-origin:0 0">recreatePojo:1624, PersistenceSession</span><i class="a" style="left:211.26px;transform:scaleX(1.0000);transform-origin:0 0">(org.apache.isis.core.runtime.system.persistence)</i></div>
<div class="fr" style="top:180px;"><span class="a" style="left:11.12px;transform:scaleX(0.9760);transform-origin:0 0">adapterFor:1567, PersistenceSession</span><i class="a" style="left:201.26px;transform:scaleX(1.0035);transform-origin:0 0">(org.apache.isis.core.runtime.system.persistence)</i></div>
<div class="fr" style="top:200px;"><span class="a" style="left:10.82px;transform:scaleX(1.0266);transform-origin:0 0">recreateAdapter:242, ObjectAdapterMemento$Type$2</span><i class="a" style="left:297.45px;transform:scaleX(1.0169);transform-origin:0 0">(org.apache.isis.viewer.wicket.model.mementos)</i></div>
<div class="fr" style="top:220px;"><span class="a" style="left:11.10px;transform:scaleX(1.0383);transform-origin:0 0">getAdapter:326, ObjectAdapterMemento$Type</span><i class="a" style="left:260.55px;transform:scaleX(1.0161);transform-origin:0 0">(org.apache.isis.viewer.wicket.model.mementos)</i></div>
<div class="fr" style="top:240px;"><span class="a" style="left:11.10px;transform:scaleX(1.0216);transform-origin:0 0">asAdapter:104, ObjectAdapterMemento$Sort$1</span><i class="a" style="left:261.75px;transform:scaleX(1.0149);transform-origin:0 0">(org.apache.isis.viewer.wicket.model.mementos)</i></div>
<div class="fr" style="top:260px;"><span class="a" style="left:11.10px;transform:scaleX(1.0421);transform-origin:0 0">getObjectAdapter:501, ObjectAdapterMemento</span><i class="a" style="left:263.45px;transform:scaleX(1.0161);transform-origin:0 0">(org.apache.isis.viewer.wicket.model.mementos)</i></div>
<div class="fr" style="top:280px;"><span class="a" style="left:10.79px;transform:scaleX(1.0389);transform-origin:0 0">load:309, EntityModel</span><i class="a" style="left:127.95px;transform:scaleX(1.0147);transform-origin:0 0">(org.apache.isis.viewer.wicket.model.models)</i></div>
<div class="fr" style="top:300px;"><span class="a" style="left:10.79px;transform:scaleX(1.0389);transform-origin:0 0">load:324, EntityModel</span><i class="a" style="left:127.95px;transform:scaleX(1.0147);transform-origin:0 0">(org.apache.isis.viewer.wicket.model.models)</i></div>
<div class="a" style="left:783px;top:0;width:10px;height:171px;background:#e6e6cf"></div>
<div class="a" style="left:783px;top:0;width:10px;height:20px;background:#0d5ea8"></div>
</div>
<div class="a" style="left:814px;top:556px;width:1px;height:376px;background:#999"></div>
<div id="vhdr" class="a"></div>
<svg style="left:820px;top:562px" width="14" height="13" viewBox="0 0 14 13"><rect x="0" y="0" width="13" height="3" fill="#c49a5a"/><rect x="0" y="5" width="13" height="3" fill="#c49a5a"/><rect x="0" y="10" width="13" height="3" fill="#c49a5a"/></svg>
<div id="vtb" class="a"></div>
<svg style="left:819px;top:584px" width="16" height="15" viewBox="0 0 16 15"><path d="M2.5 9.5L3.5 5.5Q4.2 4 5.5 4.6" stroke="#444" fill="none" stroke-width="0.9"/><path d="M10.5 10.5L13.5 6Q14 5.2 14.8 5.6" stroke="#444" fill="none" stroke-width="0.9"/><circle cx="3" cy="11" r="2.6" fill="#52b852" stroke="#2f8f2f" stroke-width="0.8"/><circle cx="8" cy="12" r="2.6" fill="#52b852" stroke="#2f8f2f" stroke-width="0.8"/><path d="M5.2 10.8L6 11" stroke="#2f8f2f" stroke-width="1"/><path d="M6 0v9M1.5 4h9" stroke="#2a9a3a" stroke-width="2"/></svg>
<div class="a" style="left:821px;top:615px;width:12px;height:2px;background:#c4c4c4"></div>
<svg style="left:821px;top:632px" width="12" height="13" viewBox="0 0 12 13"><path d="M6 12V5" stroke="#c4c4c4" stroke-width="2.4"/><path d="M0 6.5L6 0.5L12 6.5z" fill="#c4c4c4"/></svg>
<svg style="left:821px;top:654px" width="12" height="13" viewBox="0 0 12 13"><path d="M6 0V7" stroke="#c4c4c4" stroke-width="2.4"/><path d="M0 6.5L6 12.5L12 6.5z" fill="#c4c4c4"/></svg>
<svg style="left:819px;top:673px" width="16" height="18" viewBox="0 0 16 18"><path d="M5.5 1.2H11.5L14.2 4V14.2H10" fill="none" stroke="#c4c4c4" stroke-width="1.5"/><path d="M1.5 3.2H7.5L10.2 6V16.2H1.5z" fill="#f0f0f0" stroke="#c4c4c4" stroke-width="1.5"/></svg>
<div class="a" style="left:817px;top:694px;width:22px;height:20px;background:#dcdcdc;border:1px solid #b8b8b8"></div>
<svg style="left:819px;top:697px" width="16" height="14" viewBox="0 0 16 14"><rect x="2" y="0.5" width="12" height="10" fill="#c8d8e8" stroke="#888"/><rect x="2" y="0.5" width="12" height="2.5" fill="#4a86c0"/></svg>
<svg style="left:819px;top:699px" width="16" height="15" viewBox="0 0 16 15"><path d="M2.5 9.5L3.5 5.5Q4.2 4 5.5 4.6" stroke="#444" fill="none" stroke-width="0.9"/><path d="M10.5 10.5L13.5 6Q14 5.2 14.8 5.6" stroke="#444" fill="none" stroke-width="0.9"/><circle cx="3" cy="11" r="2.6" fill="#52b852" stroke="#2f8f2f" stroke-width="0.8"/><circle cx="8" cy="12" r="2.6" fill="#52b852" stroke="#2f8f2f" stroke-width="0.8"/><path d="M5.2 10.8L6 11" stroke="#2f8f2f" stroke-width="1"/></svg>
<div id="vars" class="a">
</div>
<svg style="left:844px;top:588px" width="8" height="11" viewBox="0 0 8 11"><path d="M1.5 1L6 5.5L1.5 10" stroke="#555" fill="none" stroke-width="1.3"/></svg>
<svg style="left:865px;top:587px" width="14" height="13" viewBox="0 0 14 13"><rect x="0" y="0" width="13" height="3" fill="#c49a5a"/><rect x="0" y="5" width="13" height="3" fill="#c49a5a"/><rect x="0" y="10" width="13" height="3" fill="#c49a5a"/></svg>
<svg style="left:844px;top:608px" width="8" height="11" viewBox="0 0 8 11"><path d="M1.5 1L6 5.5L1.5 10" stroke="#555" fill="none" stroke-width="1.3"/></svg>
<svg style="left:864px;top:606px" width="14" height="14" viewBox="0 0 14 14"><circle cx="7" cy="7" r="7" fill="#f8c880"/><text x="7" y="10.5" text-anchor="middle" font-family="Liberation Sans" font-size="10" fill="#555">p</text></svg>
<svg style="left:844px;top:628px" width="8" height="11" viewBox="0 0 8 11"><path d="M1.5 1L6 5.5L1.5 10" stroke="#555" fill="none" stroke-width="1.3"/></svg>
<svg style="left:863px;top:623px" width="16" height="15" viewBox="0 0 16 15"><path d="M2.5 9.5L3.5 5.5Q4.2 4 5.5 4.6" stroke="#444" fill="none" stroke-width="0.9"/><path d="M10.5 10.5L13.5 6Q14 5.2 14.8 5.6" stroke="#444" fill="none" stroke-width="0.9"/><circle cx="3" cy="11" r="2.6" fill="#52b852" stroke="#2f8f2f" stroke-width="0.8"/><circle cx="8" cy="12" r="2.6" fill="#52b852" stroke="#2f8f2f" stroke-width="0.8"/><path d="M5.2 10.8L6 11" stroke="#2f8f2f" stroke-width="1"/></svg>
<svg style="left:844px;top:648px" width="8" height="11" viewBox="0 0 8 11"><path d="M1.5 1L6 5.5L1.5 10" stroke="#555" fill="none" stroke-width="1.3"/></svg>
<svg style="left:863px;top:643px" width="16" height="15" viewBox="0 0 16 15"><path d="M2.5 9.5L3.5 5.5Q4.2 4 5.5 4.6" stroke="#444" fill="none" stroke-width="0.9"/><path d="M10.5 10.5L13.5 6Q14 5.2 14.8 5.6" stroke="#444" fill="none" stroke-width="0.9"/><circle cx="3" cy="11" r="2.6" fill="#52b852" stroke="#2f8f2f" stroke-width="0.8"/><circle cx="8" cy="12" r="2.6" fill="#52b852" stroke="#2f8f2f" stroke-width="0.8"/><path d="M5.2 10.8L6 11" stroke="#2f8f2f" stroke-width="1"/></svg>
<span class="a" style="left:-0.95px;top:509.93px;font-size:11.3px;line-height:1;white-space:pre;transform:scaleX(1.0210);transform-origin:0 0;">Debug</span>
<span class="a" style="left:56.12px;top:509.93px;font-size:11.3px;line-height:1;white-space:pre;transform:scaleX(0.9937);transform-origin:0 0;">estatio-ecp (org.estatio.app.EstatioEcpAppManifest) (SQLSERVER+no gmail)</span>
<span class="a" style="left:26.62px;top:533.01px;font-size:11.8px;line-height:1;white-space:pre;transform:scaleX(1.0129);transform-origin:0 0;">Debugger</span>
<span class="a" style="left:43.94px;top:563.49px;font-size:11.0px;line-height:1;white-space:pre;transform:scaleX(0.9533);transform-origin:0 0;">Frames</span>
<span class="a" style="left:120.75px;top:563.49px;font-size:11.0px;line-height:1;white-space:pre;transform:scaleX(0.9973);transform-origin:0 0;">Threads</span>
<span class="a" style="left:46.51px;top:588.88px;font-size:11.6px;line-height:1;white-space:pre;transform:scaleX(1.0041);transform-origin:0 0;">"qtp1453774246-115"@22,501 in group "main": RUNNING</span>
<span class="a" style="left:837.75px;top:563.07px;font-size:11.5px;line-height:1;white-space:pre;transform:scaleX(1.0038);transform-origin:0 0;">Variables</span>
<span class="a" style="left:442.56px;top:487.07px;font-size:11.5px;line-height:1;white-space:pre;transform:scaleX(0.9976);transform-origin:0 0;color:#555">FetchRequest</span>
<span class="a" style="left:537.81px;top:487.07px;font-size:11.5px;line-height:1;white-space:pre;transform:scaleX(1.0035);transform-origin:0 0;color:#555">execute()</span>
<span class="a" style="left:882.23px;top:589.27px;font-size:11.5px;line-height:1;white-space:pre;transform:scaleX(0.9932);transform-origin:0 0;"><span style="color:#660000">this</span> = <span style="color:#808080">{FetchRequest@21933}</span></span>
<span class="a" style="left:881.91px;top:609.27px;font-size:11.5px;line-height:1;white-space:pre;transform:scaleX(1.0090);transform-origin:0 0;"><span style="color:#660000">op</span> = <span style="color:#808080">{JDOStateManagerForIsis@22593}</span> "StateManager[pc=org.estatio.dom.asset.Property@2eb3a1dc, lifecycle=P_CLEAN]"</span>
<span class="a" style="left:882.22px;top:629.27px;font-size:11.5px;line-height:1;white-space:pre;transform:scaleX(1.0146);transform-origin:0 0;"><span style="color:#660000">table</span> = <span style="color:#808080">{ClassTable@22288}</span> "dbo.Property"</span>
<span class="a" style="left:882.23px;top:649.27px;font-size:11.5px;line-height:1;white-space:pre;transform:scaleX(1.0437);transform-origin:0 0;"><span style="color:#660000">fieldsToFetch</span> =</span>
<span class="a" style="left:966.73px;top:649.27px;font-size:11.5px;line-height:1;white-space:pre;font-weight:bold;transform:scaleX(1.0159);transform-origin:0 0;color:#008000">"externalReference,name,reference,acquireDate,applicationTenancyPath,area,city,displayOrder,disposalDate,fullName"</span>
<svg style="left:667px;top:562px" width="12" height="19" viewBox="0 0 12 19"><path d="M0.5 0.5V15.5L4 12L6.5 18L9 17L6.5 11H11.5z" fill="#fff" stroke="#000" stroke-width="1"/></svg>
</body></html>
